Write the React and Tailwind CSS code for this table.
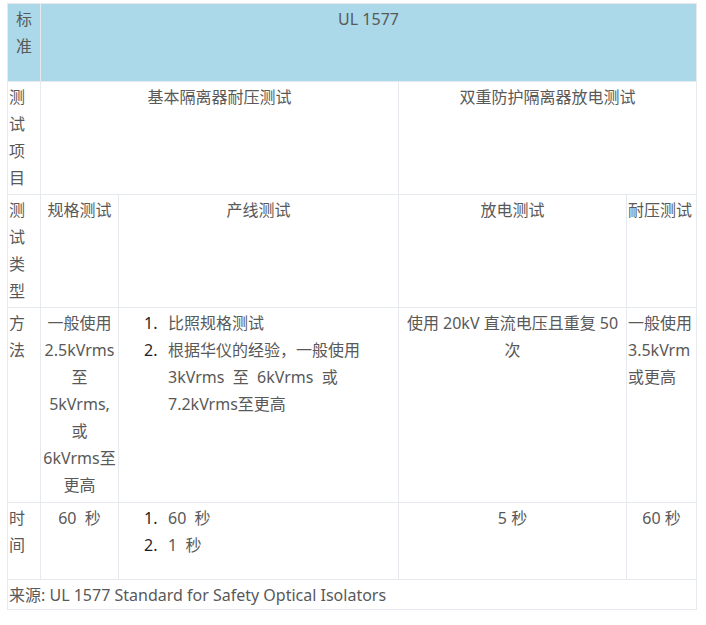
import React from "react";

const cell = "border border-[#e6e9ed] align-top p-0 pt-[2px]";

const NumList = ({ items }) => (
  <div className="pl-[25px] text-left">
    {items.map((item, i) => (
      <div key={i} className="flex">
        <span className="w-[24px] shrink-0 text-[#1f1f1f]">{i + 1}.</span>
        <span className="whitespace-pre-wrap">{item}</span>
      </div>
    ))}
  </div>
);

const Stack = ({ lines, className = "" }) => (
  <div className={className}>
    {lines.map((l, i) => (
      <div key={i}>{l}</div>
    ))}
  </div>
);

export default function App() {
  return (
    <div className="bg-white w-[706px] h-[625px] pl-[7px] pt-[3px]">
      <table
        className="table-fixed border-collapse w-[689px] text-[16px] leading-[27px] text-[#595959]"
        style={{ fontFamily: '"Noto Sans", "Noto Sans CJK SC", sans-serif' }}
      >
        <colgroup>
          <col className="w-[33px]" />
          <col className="w-[78px]" />
          <col className="w-[280px]" />
          <col className="w-[228px]" />
          <col className="w-[70px]" />
        </colgroup>
        <tbody>
          <tr className="h-[78px] bg-[#abd9e9]">
            <td className={`${cell} border-[#dbeaf0] text-center`}>
              <Stack lines={["标", "准"]} />
            </td>
            <td className={`${cell} text-center`} colSpan={4}>
              UL 1577
            </td>
          </tr>
          <tr className="h-[113px]">
            <td className={`${cell} pl-[1px]`}>
              <Stack lines={["测", "试", "项", "目"]} />
            </td>
            <td className={`${cell} text-center`} colSpan={2}>
              基本隔离器耐压测试
            </td>
            <td className={`${cell} text-center`} colSpan={2}>
              双重防护隔离器放电测试
            </td>
          </tr>
          <tr className="h-[113px]">
            <td className={`${cell} pl-[1px]`}>
              <Stack lines={["测", "试", "类", "型"]} />
            </td>
            <td className={`${cell} text-center`}>规格测试</td>
            <td className={`${cell} text-center`}>产线测试</td>
            <td className={`${cell} text-center`}>放电测试</td>
            <td className={`${cell} pl-[1px] whitespace-nowrap`}>耐压测试</td>
          </tr>
          <tr className="h-[195px]">
            <td className={`${cell} pl-[1px]`}>
              <Stack lines={["方", "法"]} />
            </td>
            <td className={`${cell} text-center`}>
              <Stack
                lines={["一般使用", "2.5kVrms", "至", "5kVrms,", "或", "6kVrms至", "更高"]}
                className="whitespace-nowrap"
              />
            </td>
            <td className={cell}>
              <NumList
                items={[
                  "比照规格测试",
                  <>
                    根据华仪的经验，一般使用
                    <br />
                    3kVrms&nbsp;&nbsp;至&nbsp;&nbsp;6kVrms&nbsp;&nbsp;或
                    <br />
                    7.2kVrms至更高
                  </>,
                ]}
              />
            </td>
            <td className={`${cell} text-center`}>
              <Stack lines={["使用 20kV 直流电压且重复 50", "次"]} className="whitespace-nowrap" />
            </td>
            <td className={`${cell} pl-[1px]`}>
              <Stack
                lines={["一般使用", "3.5kVrm", "或更高"]}
                className="whitespace-nowrap overflow-hidden"
              />
            </td>
          </tr>
          <tr className="h-[77px]">
            <td className={`${cell} pl-[1px]`}>
              <Stack lines={["时", "间"]} />
            </td>
            <td className={`${cell} text-center whitespace-pre`}>60  秒</td>
            <td className={cell}>
              <NumList items={["60  秒", "1  秒"]} />
            </td>
            <td className={`${cell} text-center`}>5 秒</td>
            <td className={`${cell} text-center`}>60 秒</td>
          </tr>
          <tr className="h-[30px]">
            <td className={`${cell} pl-[1px] whitespace-nowrap`} colSpan={5}>
              来源: UL 1577 Standard for Safety Optical Isolators
            </td>
          </tr>
        </tbody>
      </table>
    </div>
  );
}
